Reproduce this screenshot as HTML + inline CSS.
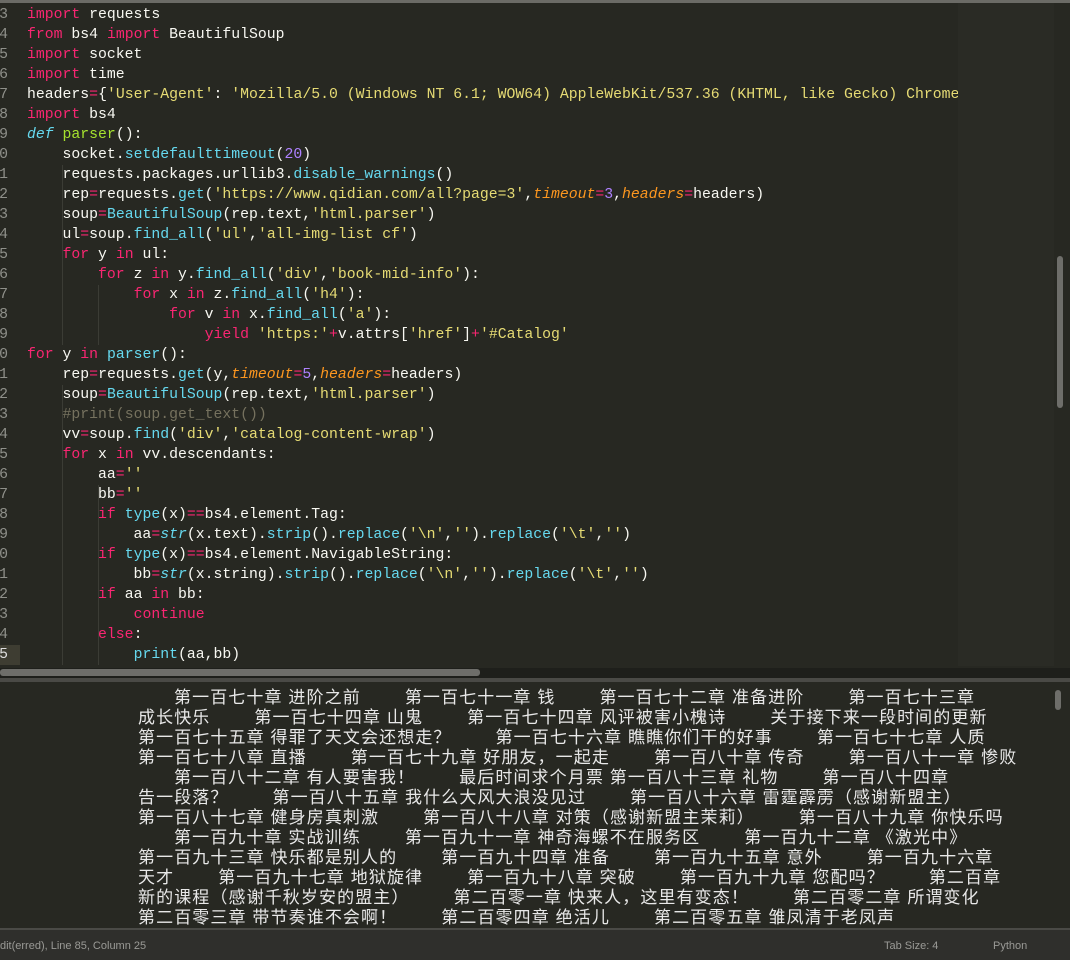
<!DOCTYPE html>
<html><head><meta charset="utf-8"><style>
html,body{margin:0;padding:0;width:1070px;height:960px;overflow:hidden;background:#272822;}
.ed{position:absolute;left:0;top:0;width:1070px;height:668px;background:#272822;}
.topbar{position:absolute;left:0;top:0;width:1070px;height:3px;background:#6b6b66;}
.gut{position:absolute;left:0;top:5px;width:20px;font:14.8px "Liberation Mono",monospace;color:#8f908a;}
.gut div{height:20px;line-height:20px;text-align:right;padding-right:12px;margin-left:-30px;width:38px;}
.code{position:absolute;left:27px;top:5px;width:931px;height:661px;overflow:hidden;font:14.8px/20px "Liberation Mono",monospace;color:#f8f8f2;white-space:pre;}
.k{color:#f92672}.s{color:#e6db74}.f{color:#66d9ef}.n{color:#ae81ff}.d{color:#66d9ef;font-style:italic}.g{color:#a6e22e}.p{color:#fd971f;font-style:italic}.c{color:#75715e}.i{color:#66d9ef;font-style:italic}
.hl{position:absolute;left:0;top:645px;width:20px;height:20px;background:#3e3d32;}
.mini{position:absolute;left:958px;top:3px;width:96px;height:663px;background:#2a2b25;}
.vs{position:absolute;left:1057px;top:256px;width:6px;height:152px;background:#6e6e6a;border-radius:3px;}
.hsb{position:absolute;left:0;top:668px;width:1070px;height:10px;background:#1e1f1b;}
.hth{position:absolute;left:0;top:669px;width:480px;height:7px;background:#6e6e6a;border-radius:3px;}
.sep{position:absolute;left:0;top:678px;width:1070px;height:4px;background:#4a4a46;}
.out{position:absolute;left:0;top:682px;width:1070px;height:246px;background:#272822;}
.ol{position:absolute;font:17px/20px "Liberation Sans","Noto Sans CJK SC",sans-serif;letter-spacing:1.1px;color:#e8e8e8;white-space:nowrap;}
.ol i{display:inline-block;width:44px;}
.ovs{position:absolute;left:1055px;top:690px;width:6px;height:20px;background:#6e6e6a;border-radius:3px;}
.line2{position:absolute;left:0;top:928px;width:1070px;height:2px;background:#4a4a46;}
.st{position:absolute;left:0;top:930px;width:1070px;height:30px;background:#2f2f2c;font:11px "Liberation Sans",sans-serif;color:#9a9a96;}
.st span{position:absolute;top:10px;}
.ig{position:absolute;width:1px;background:#3b3c35;}
</style></head><body>
<div class="ed">
<div class="topbar"></div>
<div class="hl"></div>
<div class="gut">
<div>3</div><div>4</div><div>5</div><div>6</div><div>7</div><div>8</div><div>9</div><div>0</div><div>1</div><div>2</div><div>3</div><div>4</div><div>5</div><div>6</div><div>7</div><div>8</div><div>9</div><div>0</div><div>1</div><div>2</div><div>3</div><div>4</div><div>5</div><div>6</div><div>7</div><div>8</div><div>9</div><div>0</div><div>1</div><div>2</div><div>3</div><div>4</div><div style="color:#ddd">5</div>
</div>
<div class="ig" style="left:62px;top:165px;height:180px"></div>
<div class="ig" style="left:62px;top:385px;height:280px"></div>
<div class="ig" style="left:98px;top:285px;height:60px"></div>
<div class="ig" style="left:98px;top:485px;height:180px"></div>
<div class="code"><span class="k">import</span> requests
<span class="k">from</span> bs4 <span class="k">import</span> BeautifulSoup
<span class="k">import</span> socket
<span class="k">import</span> time
headers<span class="k">=</span>{<span class="s">'User-Agent'</span>: <span class="s">'Mozilla/5.0 (Windows NT 6.1; WOW64) AppleWebKit/537.36 (KHTML, like Gecko) Chrome/63.0'</span>}
<span class="k">import</span> bs4
<span class="d">def</span> <span class="g">parser</span>():
    socket.<span class="f">setdefaulttimeout</span>(<span class="n">20</span>)
    requests.packages.urllib3.<span class="f">disable_warnings</span>()
    rep<span class="k">=</span>requests.<span class="f">get</span>(<span class="s">'https://www.qidian.com/all?page=3'</span>,<span class="p">timeout</span><span class="k">=</span><span class="n">3</span>,<span class="p">headers</span><span class="k">=</span>headers)
    soup<span class="k">=</span><span class="f">BeautifulSoup</span>(rep.text,<span class="s">'html.parser'</span>)
    ul<span class="k">=</span>soup.<span class="f">find_all</span>(<span class="s">'ul'</span>,<span class="s">'all-img-list cf'</span>)
    <span class="k">for</span> y <span class="k">in</span> ul:
        <span class="k">for</span> z <span class="k">in</span> y.<span class="f">find_all</span>(<span class="s">'div'</span>,<span class="s">'book-mid-info'</span>):
            <span class="k">for</span> x <span class="k">in</span> z.<span class="f">find_all</span>(<span class="s">'h4'</span>):
                <span class="k">for</span> v <span class="k">in</span> x.<span class="f">find_all</span>(<span class="s">'a'</span>):
                    <span class="k">yield</span> <span class="s">'https:'</span><span class="k">+</span>v.attrs[<span class="s">'href'</span>]<span class="k">+</span><span class="s">'#Catalog'</span>
<span class="k">for</span> y <span class="k">in</span> <span class="f">parser</span>():
    rep<span class="k">=</span>requests.<span class="f">get</span>(y,<span class="p">timeout</span><span class="k">=</span><span class="n">5</span>,<span class="p">headers</span><span class="k">=</span>headers)
    soup<span class="k">=</span><span class="f">BeautifulSoup</span>(rep.text,<span class="s">'html.parser'</span>)
    <span class="c">#print(soup.get_text())</span>
    vv<span class="k">=</span>soup.<span class="f">find</span>(<span class="s">'div'</span>,<span class="s">'catalog-content-wrap'</span>)
    <span class="k">for</span> x <span class="k">in</span> vv.descendants:
        aa<span class="k">=</span><span class="s">''</span>
        bb<span class="k">=</span><span class="s">''</span>
        <span class="k">if</span> <span class="f">type</span>(x)<span class="k">==</span>bs4.element.Tag:
            aa<span class="k">=</span><span class="i">str</span>(x.text).<span class="f">strip</span>().<span class="f">replace</span>(<span class="s">'\n'</span>,<span class="s">''</span>).<span class="f">replace</span>(<span class="s">'\t'</span>,<span class="s">''</span>)
        <span class="k">if</span> <span class="f">type</span>(x)<span class="k">==</span>bs4.element.NavigableString:
            bb<span class="k">=</span><span class="i">str</span>(x.string).<span class="f">strip</span>().<span class="f">replace</span>(<span class="s">'\n'</span>,<span class="s">''</span>).<span class="f">replace</span>(<span class="s">'\t'</span>,<span class="s">''</span>)
        <span class="k">if</span> aa <span class="k">in</span> bb:
            <span class="k">continue</span>
        <span class="k">else</span>:
            <span class="f">print</span>(aa,bb)</div>
<div class="mini"></div>
<div class="vs"></div>
</div>
<div class="hsb"></div><div class="hth"></div>
<div class="sep"></div>
<div class="out"></div>
<div class="ol" style="left:174px;top:688px">第一百七十章 进阶之前<i></i>第一百七十一章 钱<i></i>第一百七十二章 准备进阶<i></i>第一百七十三章</div>
<div class="ol" style="left:138px;top:708px">成长快乐<i></i>第一百七十四章 山鬼<i></i>第一百七十四章 风评被害小槐诗<i></i>关于接下来一段时间的更新</div>
<div class="ol" style="left:138px;top:728px">第一百七十五章 得罪了天文会还想走？<i></i>第一百七十六章 瞧瞧你们干的好事<i></i>第一百七十七章 人质</div>
<div class="ol" style="left:138px;top:748px">第一百七十八章 直播<i></i>第一百七十九章 好朋友，一起走<i></i>第一百八十章 传奇<i></i>第一百八十一章 惨败</div>
<div class="ol" style="left:174px;top:768px">第一百八十二章 有人要害我！<i></i>最后时间求个月票 第一百八十三章 礼物<i></i>第一百八十四章</div>
<div class="ol" style="left:138px;top:788px">告一段落？<i></i>第一百八十五章 我什么大风大浪没见过<i></i>第一百八十六章 雷霆霹雳（感谢新盟主）</div>
<div class="ol" style="left:138px;top:808px">第一百八十七章 健身房真刺激<i></i>第一百八十八章 对策（感谢新盟主茉莉）<i></i>第一百八十九章 你快乐吗</div>
<div class="ol" style="left:174px;top:828px">第一百九十章 实战训练<i></i>第一百九十一章 神奇海螺不在服务区<i></i>第一百九十二章 《激光中》</div>
<div class="ol" style="left:138px;top:848px">第一百九十三章 快乐都是别人的<i></i>第一百九十四章 准备<i></i>第一百九十五章 意外<i></i>第一百九十六章</div>
<div class="ol" style="left:138px;top:868px">天才<i></i>第一百九十七章 地狱旋律<i></i>第一百九十八章 突破<i></i>第一百九十九章 您配吗？<i></i>第二百章</div>
<div class="ol" style="left:138px;top:888px">新的课程（感谢千秋岁安的盟主）<i></i>第二百零一章 快来人，这里有变态！<i></i>第二百零二章 所谓变化</div>
<div class="ol" style="left:138px;top:908px">第二百零三章 带节奏谁不会啊！<i></i>第二百零四章 绝活儿<i></i>第二百零五章 雏凤清于老凤声</div>
<div class="ovs"></div>
<div class="line2"></div>
<div class="st"><span style="left:0">dit(erred), Line 85, Column 25</span><span style="left:884px">Tab Size: 4</span><span style="left:993px">Python</span></div>
</body></html>
